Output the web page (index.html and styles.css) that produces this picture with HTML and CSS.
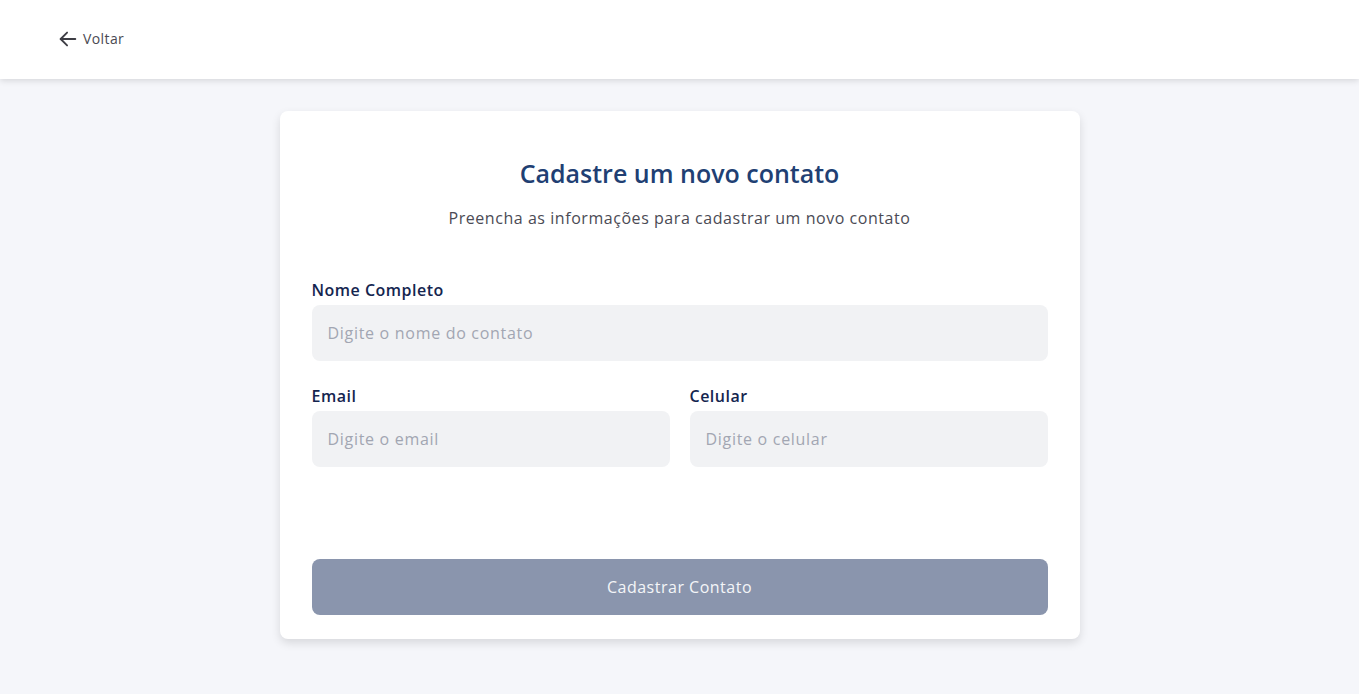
FILE: index.html
```html
<!DOCTYPE html>
<html lang="pt-BR">
<head>
<meta charset="utf-8">
<title>Cadastrar contato</title>
<link rel="stylesheet" href="styles.css">
</head>
<body>
<header class="topbar">
  <a class="back" href="#">
    <svg class="back-icon" width="22" height="22" viewBox="0 0 24 24" fill="none" stroke="currentColor" stroke-width="2" stroke-linecap="round" stroke-linejoin="round"><path d="M20 12H4"/><path d="M11 5l-7 7 7 7"/></svg>
    <span>Voltar</span>
  </a>
</header>
<main class="page">
  <section class="card">
    <h1 class="title">Cadastre um novo contato</h1>
    <p class="subtitle">Preencha as informações para cadastrar um novo contato</p>
    <form class="form">
      <div class="field">
        <label class="label">Nome Completo</label>
        <input class="input" placeholder="Digite o nome do contato">
      </div>
      <div class="row">
        <div class="field">
          <label class="label">Email</label>
          <input class="input" placeholder="Digite o email">
        </div>
        <div class="field">
          <label class="label">Celular</label>
          <input class="input" placeholder="Digite o celular">
        </div>
      </div>
      <button type="button" class="submit">Cadastrar Contato</button>
    </form>
  </section>
</main>
</body>
</html>
```
FILE: styles.css
```css
* { box-sizing: border-box; }
html, body { margin: 0; padding: 0; }
body {
  font-family: "Open Sans", "Noto Sans", sans-serif;
  background: #f5f6fa;
  min-height: 694px;
}
.topbar {
  height: 79px;
  background: #fff;
  box-shadow: 0 2px 6px rgba(0,0,0,0.12);
  display: flex;
  align-items: center;
  padding-left: 57px;
}
.back {
  display: flex;
  align-items: center;
  gap: 4px;
  color: #4a4a52;
  text-decoration: none;
  font-size: 14px;
  letter-spacing: 0.4px;
  margin-top: -2px;
}
.back-icon { color: #3d3d44; }
.page {
  display: flex;
  justify-content: center;
  padding-top: 32px;
}
.card {
  width: 800px;
  background: #fff;
  border-radius: 8px;
  box-shadow: 0 4px 10px rgba(0,0,0,0.12);
  padding: 46px 32px 24px;
}
.title {
  margin: 0;
  text-align: center;
  font-size: 25px;
  font-weight: 600;
  color: #213f73;
  line-height: 32px;
}
.subtitle {
  margin: 17px 0 0;
  text-align: center;
  font-size: 16px;
  letter-spacing: 0.55px;
  color: #4b4b55;
  line-height: 24px;
}
.form {
  margin-top: 49px;
  display: flex;
  flex-direction: column;
}
.field {
  display: flex;
  flex-direction: column;
  gap: 4px;
  flex: 1;
}
.row {
  display: flex;
  gap: 20px;
  margin-top: 24px;
}
.label {
  font-size: 16px;
  font-weight: 600;
  letter-spacing: 0.5px;
  color: #14254f;
  line-height: 22px;
}
.input {
  height: 56px;
  border: none;
  border-radius: 8px;
  background: #f1f2f4;
  padding: 0 16px;
  font-family: inherit;
  font-size: 16px;
  letter-spacing: 0.7px;
  color: #333;
  outline: none;
}
.input::placeholder { color: #a2a6b2; }
.submit {
  margin-top: 92px;
  height: 56px;
  border: none;
  border-radius: 8px;
  background: #8a95ad;
  color: #f4f5f8;
  font-family: inherit;
  font-size: 16px;
  letter-spacing: 0.5px;
}
```
